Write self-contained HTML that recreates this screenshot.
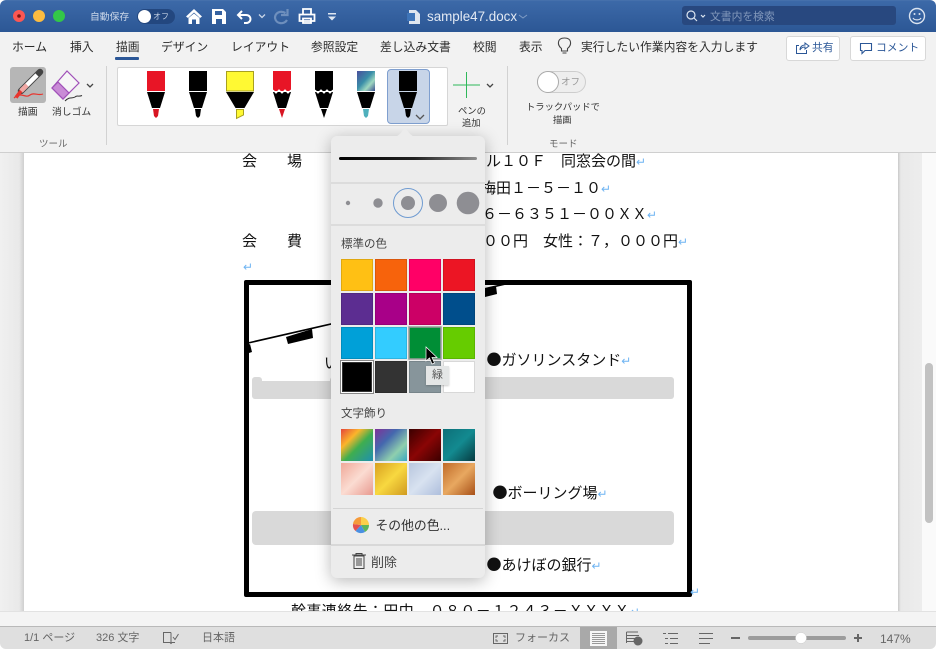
<!DOCTYPE html>
<html lang="ja"><head><meta charset="utf-8"><title>sample47.docx</title>
<style>
html,body{margin:0;padding:0;background:#fff}
#w{position:relative;width:936px;height:649px;overflow:hidden;font-family:"Liberation Sans","Noto Sans CJK JP",sans-serif;background:#fff}
#w div{position:absolute}
.t{position:absolute;white-space:nowrap;line-height:1}
svg{position:absolute;left:0;top:0}
.d{font-family:"Noto Sans CJK JP",sans-serif;font-size:15px;color:#111}
.m{color:#6fb4f2;font-size:12px}
.tab{font-size:11.8px;color:#2b2b2b;top:42px}
.s{font-size:11px;color:#666;top:633px}
.r{font-size:9.8px;color:#333}
</style></head><body><div id="w">

<!-- document area -->
<div style="left:0;top:153px;width:936px;height:458px;overflow:hidden;background:#ebebeb">
  <div style="left:0;top:0;width:24px;height:458px;background:linear-gradient(90deg,#f0f0f0,#e9e9e9 80%,#cfcfcf)"></div>
  <div style="left:24px;top:0;width:874px;height:458px;background:#fff"></div>
  <div style="left:898px;top:0;width:24px;height:458px;background:linear-gradient(90deg,#c9c9c9,#e9e9e9 12%,#ededed)"></div>
  <div style="left:922px;top:0;width:14px;height:458px;background:#fafafa"></div>
  <div style="left:925px;top:210px;width:8px;height:160px;border-radius:4px;background:#c2c2c2"></div>

  <div class="t d" style="left:242px;top:0">会　　場</div>
  <div class="t d" style="left:486px;top:0">ル１０Ｆ　同窓会の間<span class="m">↵</span></div>
  <div class="t d" style="left:481px;top:27px">梅田１－５－１０<span class="m">↵</span></div>
  <div class="t d" style="left:482px;top:53px">６－６３５１－００ＸＸ<span class="m">↵</span></div>
  <div class="t d" style="left:242px;top:80px">会　　費</div>
  <div class="t d" style="left:483px;top:80px">００円　女性：７，０００円<span class="m">↵</span></div>
  <div class="t m" style="left:243px;top:108px">↵</div>

  <div style="left:252px;top:224px;width:10px;height:8px;background:#d9d9d9;border-radius:3px 3px 0 0"></div>
  <div style="left:252px;top:228px;width:100px;height:18px;background:#d9d9d9;border-radius:3px"></div>
  <div style="left:330px;top:224px;width:344px;height:22px;background:#d9d9d9;border-radius:3px"></div>
  <div style="left:252px;top:358px;width:422px;height:34px;background:#d9d9d9;border-radius:4px"></div>
  <div style="left:244px;top:127px;width:438px;height:307px;border:5px solid #000;border-radius:2px"></div>
  <svg width="936" height="458" style="left:0;top:0">
    <path d="M248 190L510 130" stroke="#000" stroke-width="1.6" fill="none"/>
    <path d="M286 184L312 176L313 185L288 191Z" fill="#000"/>
    <path d="M485 136L496 133L497 141L485 144Z" fill="#000"/>
    <path d="M248 192L249 200L252 199L250 191Z" fill="#000"/>
  </svg>
  <div class="t d" style="left:324px;top:202px">い</div>
  <div class="t d" style="left:486.500px;top:199px">●ガソリンスタンド<span class="m">↵</span></div>
  <div class="t d" style="left:492.500px;top:332px">●ボーリング場<span class="m">↵</span></div>
  <div class="t d" style="left:486.500px;top:404px">●あけぼの銀行<span class="m">↵</span></div>
  <div class="t m" style="left:690px;top:433px">↵</div>
  <div class="t d" style="left:291px;top:450px;letter-spacing:.4px">幹事連絡先：田中　０８０－１２４３－ＸＸＸＸ<span class="m">↵</span></div>
</div>

<!-- status -->
<div style="left:0;top:611px;width:936px;height:15px;background:#f4f4f4;border-top:1px solid #e2e2e2;box-sizing:border-box"></div>
<div style="left:0;top:626px;width:936px;height:23px;background:#dfdfdf;border-top:1px solid #b9b9b9;box-sizing:border-box;border-radius:0 0 6px 6px"></div>
<div style="left:580px;top:627px;width:37px;height:22px;background:#a9a9a9"></div>
<span class="t s" style="left:24px">1/1 ページ</span>
<span class="t s" style="left:96px">326 文字</span>
<span class="t s" style="left:202px">日本語</span>
<span class="t s" style="left:515px">フォーカス</span>
<span class="t s" style="left:880px;font-size:12px">147%</span>
<svg width="936" height="649">
  <g fill="none" stroke="#666" stroke-width="1">
    <path d="M171 632.500H163.500V642.500H170L171 643.500L172 642.500H175M171 632.500V643M173 637L175 639.500L178.500 634"/>
    <rect x="493.500" y="633.500" width="14" height="10"/>
    <path d="M496 638V636H498M503 636H505V638M505 639V641H503M498 641H496V639" stroke-width=".9"/>
    <path d="M590.500 631.500H606.500V645.500H590.500Z" fill="#f6f6f6" stroke="#f6f6f6"/>
    <path d="M592 633.500H605M592 635.500H605M592 637.500H605M592 639.500H605M592 641.500H605M592 643.500H605" stroke="#999"/>
    <path d="M626.500 632H638M627 635.500H639M627 638.500H636M627 641.500H634M626.500 632V643"/>
    <path d="M663 633.500H666M668 633.500H678M665 638.500H668M670 638.500H678M665 643.500H668M670 643.500H678"/>
    <path d="M699 633.500H713M699 638.500H713M699 643.500H710"/>
  </g>
  <circle cx="638" cy="641" r="4.500" fill="#666"/>
  <rect x="731" y="637" width="9" height="2" fill="#666"/>
  <rect x="748" y="636" width="98" height="4" rx="2" fill="#9c9c9c"/>
  <circle cx="801" cy="638" r="5.500" fill="#fff" stroke="#ccc" stroke-width=".5"/>
  <path d="M854 638H862M858 634V642" stroke="#666" stroke-width="2"/>
</svg>

<!-- title bar -->
<div style="left:0;top:0;width:936px;height:32px;background:linear-gradient(#4a74ae 0,#3c69a8 4%,#2c5795 100%);border-radius:6px 6px 0 0"></div>
<span class="t" style="left:90px;top:12.500px;font-size:9.800px;color:#c9d6e8">自動保存</span>
<div style="left:137px;top:9px;width:38px;height:15px;border-radius:8px;background:#23477f"></div>
<div style="left:138px;top:10px;width:13px;height:13px;border-radius:50%;background:#fff"></div>
<span class="t" style="left:153px;top:13px;font-size:8px;color:#c3d0e3">オフ</span>
<span class="t" style="left:427px;top:10px;font-size:13.400px;color:#e2e9f3">sample47.docx</span>
<div style="left:682px;top:6px;width:214px;height:19px;border-radius:3px;background:#28487f"></div>
<span class="t" style="left:710px;top:12px;font-size:10.800px;color:#8298bb">文書内を検索</span>
<svg width="936" height="32">
  <circle cx="19" cy="16" r="6" fill="#fc5753"/><circle cx="19" cy="16" r="1.800" fill="#7d1512"/>
  <circle cx="39" cy="16" r="6" fill="#fdbc40"/><circle cx="59" cy="16" r="6" fill="#33c748"/>
  <path d="M194 9L186 16.500L188 18L194 12.500L200 18L202 16.500Z" fill="#fff"/>
  <path d="M188.500 18L194 13.500L199.500 18V24H196V19.500H192V24H188.500Z" fill="#fff"/>
  <path d="M212 9H223L226 12V24H212ZM215 11V15H222V11ZM216 19V24H222V19Z" fill="#fff" fill-rule="evenodd"/>
  <path d="M242 11L238 15L242 19M238 15H246C252 15 252 23 246 23H244" fill="none" stroke="#fff" stroke-width="2"/>
  <path d="M259 14.500L262 17.500L265 14.500" fill="none" stroke="#c9d6e8" stroke-width="1.300"/>
  <path d="M287.500 9V15H281M285.500 13C280 10 275 13 275 18C276 24 284 25 287 20" fill="none" stroke="#6e8fbd" stroke-width="2.200"/>
  <path d="M303 14V9H311V14M299.500 14.500H314.500V21H299.500ZM303 18.500H311V23H303Z" fill="none" stroke="#fff" stroke-width="1.800"/>
  <path d="M328 13H336V14.500H328ZM328 16.500H336L332 20.500Z" fill="#dfe7f2"/>
  <path d="M409 10H416L420 14V24H409Z" fill="#dfe6ef"/><rect x="407" y="13" width="8" height="8" fill="#3e74b8"/>
  <path d="M519 15L523 18L527 15" fill="none" stroke="#7f9cc4" stroke-width="1"/>
  <circle cx="691" cy="15" r="4" fill="none" stroke="#dce5f0" stroke-width="1.200"/>
  <path d="M694 18L697 21M701 15L703 17L705 15" stroke="#dce5f0" stroke-width="1.200" fill="none"/>
  <circle cx="917" cy="16" r="7.500" fill="none" stroke="#dbe4f0" stroke-width="1.400"/>
  <circle cx="914.500" cy="14" r="1" fill="#dbe4f0"/><circle cx="919.500" cy="14" r="1" fill="#dbe4f0"/>
  <path d="M913 18C914.500 20.500 919.500 20.500 921 18" fill="none" stroke="#dbe4f0" stroke-width="1.200"/>
</svg>

<!-- ribbon -->
<div style="left:0;top:32px;width:936px;height:121px;background:#f2f2f2;border-bottom:1px solid #cfcfcf;box-sizing:border-box"></div>
<span class="t tab" style="left:12px">ホーム</span>
<span class="t tab" style="left:70px">挿入</span>
<span class="t tab" style="left:116px">描画</span>
<div style="left:115px;top:57px;width:24px;height:3px;background:#2b5797;border-radius:1px"></div>
<span class="t tab" style="left:161px">デザイン</span>
<span class="t tab" style="left:231px">レイアウト</span>
<span class="t tab" style="left:311px">参照設定</span>
<span class="t tab" style="left:380px">差し込み文書</span>
<span class="t tab" style="left:473px">校閲</span>
<span class="t tab" style="left:519px">表示</span>
<span class="t tab" style="left:581px">実行したい作業内容を入力します</span>
<div style="left:786px;top:36px;width:52px;height:23px;background:#fff;border:1px solid #d8d8d8;border-radius:3px"></div>
<div style="left:850px;top:36px;width:74px;height:23px;background:#fff;border:1px solid #d8d8d8;border-radius:3px"></div>
<span class="t" style="left:812px;top:43px;font-size:10.800px;color:#2b5797">共有</span>
<span class="t" style="left:876px;top:43px;font-size:10.800px;color:#2b5797">コメント</span>

<div style="left:10px;top:67px;width:36px;height:36px;background:#b6b6b6;border-radius:3px"></div>
<span class="t r" style="left:18px;top:107.500px">描画</span>
<span class="t r" style="left:52px;top:107.500px">消しゴム</span>
<span class="t" style="left:39px;top:139.500px;font-size:9.500px;color:#666">ツール</span>
<span class="t r" style="left:458px;top:106.500px;font-size:9.300px">ペンの</span>
<span class="t r" style="left:462px;top:118.500px;font-size:9.300px">追加</span>
<span class="t r" style="left:526px;top:102.500px;font-size:9.300px">トラックパッドで</span>
<span class="t r" style="left:553px;top:115.500px;font-size:9.300px">描画</span>
<span class="t" style="left:549px;top:139.500px;font-size:9.500px;color:#666">モード</span>
<div style="left:117px;top:67px;width:329px;height:57px;background:#fff;border:1px solid #d6d6d6;border-radius:2px"></div>
<div style="left:387px;top:69px;width:41px;height:53px;background:#c8d5e8;border:1px solid #7f9fcf;border-radius:4px;box-sizing:content-box"></div>
<div style="left:537px;top:71px;width:47px;height:20px;border:1px solid #cdcdcd;border-radius:11px;background:#eee"></div>
<div style="left:537px;top:71px;width:20px;height:20px;border-radius:50%;background:#fff;border:1px solid #aaa"></div>
<span class="t" style="left:561px;top:77.500px;font-size:9.500px;color:#999">オフ</span>

<svg width="936" height="153">
  <path d="M106.500 66V145M507.500 66V145" stroke="#d2d2d2"/>
  <!-- draw icon -->
  <path d="M21 91L40 72" stroke="#444" stroke-width="6.500" stroke-linecap="round"/>
  <path d="M21 91L37 75" stroke="#fff" stroke-width="4.500"/>
  <path d="M21 91L27 85" stroke="#f2a8a4" stroke-width="4.500"/>
  <path d="M21 91L16 97.500" stroke="#e8352e" stroke-width="3.500"/>
  <path d="M14 98C22 91 25 99 30 95C34 92 38 96 43 94" fill="none" stroke="#e8352e" stroke-width="1.200"/>
  <!-- eraser -->
  <path d="M52 88L67 71L79 83L63 99Z" fill="#f6f6f6" stroke="#a050b8" stroke-width="1.200"/>
  <path d="M52 88L58 82L69 93L63 99Z" fill="#c98bd6" stroke="#a050b8" stroke-width="1.200"/>
  <path d="M65 101C70 96 72 99 75 97C77 95 79 97 82 95.500" fill="none" stroke="#333" stroke-width="1"/>
  <path d="M87 84L90 87L93 84M487 84L490 87L493 84" fill="none" stroke="#444" stroke-width="1.300"/>
  <!-- pens -->
  <defs>
    <g id="c"><path d="M-9 92H9L4 108H-4Z" fill="#000"/></g>
  </defs>
  <g transform="translate(156 0)"><rect x="-9" y="71" width="18" height="20" fill="#e81526"/><use href="#c"/><path d="M-3 109H3L2 116L0 118L-2 116Z" fill="#d81522"/></g>
  <g transform="translate(198 0)"><rect x="-9" y="71" width="18" height="20" fill="#000"/><use href="#c"/><path d="M-3 109H3L2 116L0 118L-2 116Z" fill="#000"/></g>
  <g transform="translate(240 0)"><rect x="-13.500" y="71.500" width="27" height="19.500" fill="#fff933" stroke="#a8a020"/><path d="M-14 92H14L4.500 108H-4.500Z" fill="#000"/><path d="M-3.500 109.500H3.500V115L-3.500 118.500Z" fill="#fff933" stroke="#a8a020"/></g>
  <g transform="translate(282 0)"><rect x="-9" y="71" width="18" height="20" fill="#e81526"/><path d="M-9 92H9L4 108H-4Z" fill="#000"/><path d="M-9 90L-6 93L-3 90L0 93L3 90L6 93L9 90" fill="none" stroke="#fff" stroke-width="1.200"/><path d="M-3 109H3L0 118Z" fill="#d81522"/></g>
  <g transform="translate(324 0)"><rect x="-9" y="71" width="18" height="20" fill="#000"/><path d="M-9 92H9L4 108H-4Z" fill="#000"/><path d="M-9 90L-6 93L-3 90L0 93L3 90L6 93L9 90" fill="none" stroke="#fff" stroke-width="1.200"/><path d="M-3 109H3L0 118Z" fill="#000"/></g>
  <g transform="translate(366 0)"><defs><linearGradient id="g1" x1="0" y1="0" x2="1" y2="1"><stop offset="0" stop-color="#4a4f9c"/><stop offset=".45" stop-color="#3a8ea8"/><stop offset=".7" stop-color="#9fd8c0"/><stop offset="1" stop-color="#3c4f90"/></linearGradient></defs><rect x="-9" y="71" width="18" height="20" fill="url(#g1)"/><use href="#c"/><path d="M-3 109H3L2 116L0 118L-2 116Z" fill="#4fb0bc"/></g>
  <g transform="translate(408 0)"><rect x="-9" y="71" width="18" height="20" fill="#000"/><use href="#c"/><path d="M-3 109H3L2 116L0 118L-2 116Z" fill="#000"/></g>
  <path d="M416 115L420 119L424 115" fill="none" stroke="#555" stroke-width="1.300"/>
  <!-- add pen -->
  <path d="M453 85H480M466.500 72V98" stroke="#2fb85a" stroke-width="1"/>
  <!-- bulb -->
  <path d="M561.500 48.500C557 45 557 38 564.500 38C572 38 572 45 567.500 48.500V51H561.500Z M562.500 53H566.500" fill="none" stroke="#444" stroke-width="1.100"/>
  <!-- share -->
  <path d="M799 45.500H796.500V53.500H806.500V50M800 50C800 46.500 802.500 45 805 45V43L809 46L805 49V47C803 47 801 48 800 50Z" fill="none" stroke="#2b5797" stroke-width="1"/>
  <!-- comment -->
  <path d="M860.500 43.500H871.500V50.500H865L862 53.500V50.500H860.500Z" fill="none" stroke="#2b5797" stroke-width="1.100"/>
</svg>

<!-- popover -->
<div style="left:331px;top:136px;width:154px;height:442px;background:#ececec;border-radius:6px;box-shadow:0 3px 16px rgba(0,0,0,.28)"></div>
<div style="left:331px;top:182px;width:154px;height:2px;background:#dcdcdc"></div>
<div style="left:331px;top:224px;width:154px;height:2px;background:#dcdcdc"></div>
<div style="left:333px;top:508px;width:150px;height:1px;background:#d4d4d4"></div>
<div style="left:331px;top:544px;width:154px;height:2px;background:#d8d8d8"></div>
<span class="t" style="left:341px;top:238px;font-size:11.500px;color:#444;margin-top:0.500px;transform:translateY(0.500px)">標準の色</span>
<span class="t" style="left:341px;top:408.500px;font-size:11.500px;color:#444">文字飾り</span>
<span class="t" style="left:375.500px;top:520px;font-size:12.800px;color:#333">その他の色...</span>
<span class="t" style="left:371px;top:555.500px;font-size:13px;color:#444">削除</span>

<svg width="936" height="649">
  <defs>
    <linearGradient id="ln" x1="0" x2="1"><stop offset="0" stop-color="#000"/><stop offset=".55" stop-color="#222"/><stop offset="1" stop-color="#8d8d8d"/></linearGradient>
    <linearGradient id="a1" x1="0" y1="0" x2="1" y2="1"><stop offset="0" stop-color="#e4453a"/><stop offset=".3" stop-color="#fbb52b"/><stop offset=".55" stop-color="#3fae4f"/><stop offset="1" stop-color="#1f8fb0"/></linearGradient>
    <linearGradient id="a2" x1="0" y1="0" x2="1" y2="1"><stop offset="0" stop-color="#7f3298"/><stop offset=".35" stop-color="#4468ae"/><stop offset=".7" stop-color="#8fcfae"/><stop offset="1" stop-color="#3ba8c0"/></linearGradient>
    <linearGradient id="a3" x1="0" y1="0" x2="1" y2="1"><stop offset="0" stop-color="#3a0000"/><stop offset=".5" stop-color="#8a0505"/><stop offset="1" stop-color="#3a0000"/></linearGradient>
    <linearGradient id="a4" x1="0" y1="0" x2="1" y2="1"><stop offset="0" stop-color="#0d6f78"/><stop offset=".5" stop-color="#138a90"/><stop offset="1" stop-color="#063a40"/></linearGradient>
    <linearGradient id="a5" x1="0" y1="0" x2="1" y2="1"><stop offset="0" stop-color="#f0a898"/><stop offset=".5" stop-color="#fbdcd2"/><stop offset="1" stop-color="#e89a90"/></linearGradient>
    <linearGradient id="a6" x1="0" y1="0" x2="1" y2="1"><stop offset="0" stop-color="#d8a020"/><stop offset=".5" stop-color="#f8d840"/><stop offset="1" stop-color="#d09a20"/></linearGradient>
    <linearGradient id="a7" x1="0" y1="0" x2="1" y2="1"><stop offset="0" stop-color="#b8c6de"/><stop offset=".5" stop-color="#d8e2f0"/><stop offset="1" stop-color="#aebedc"/></linearGradient>
    <linearGradient id="a8" x1="0" y1="0" x2="1" y2="1"><stop offset="0" stop-color="#c06a28"/><stop offset=".5" stop-color="#e8a860"/><stop offset="1" stop-color="#a85018"/></linearGradient>
    <filter id="nz" x="0" y="0" width="1" height="1" color-interpolation-filters="sRGB">
      <feTurbulence type="fractalNoise" baseFrequency=".45" numOctaves="2" seed="4" result="n"/>
      <feColorMatrix in="n" type="matrix" values="0 0 0 0 .5  0 0 0 0 .5  0 0 0 0 .5  1.400 0 0 0 -.35" result="g"/>
      <feBlend in="g" in2="SourceGraphic" mode="soft-light" result="b"/>
      <feComposite in="b" in2="SourceGraphic" operator="in"/>
    </filter>
  </defs>
  <path d="M395 137C401 135 402 130 405 128C408 130 409 135 415 137Z" fill="#ececec"/>
  <rect x="339" y="157" width="138" height="3" rx="1.500" fill="url(#ln)"/>
  <circle cx="348" cy="203" r="2.200" fill="#8e8e93"/>
  <circle cx="378" cy="203" r="4.700" fill="#8e8e93"/>
  <circle cx="408" cy="203" r="7" fill="#8e8e93"/>
  <circle cx="408" cy="203" r="14.500" fill="none" stroke="#6f9bd1" stroke-width="1"/>
  <circle cx="438" cy="203" r="9" fill="#8e8e93"/>
  <circle cx="468" cy="203" r="11.300" fill="#8e8e93"/>
  <!-- swatches -->
  <g stroke-width="1">
    <rect x="341.500" y="259.500" width="31" height="31" fill="#ffc014" stroke="#e0a810"/>
    <rect x="375.500" y="259.500" width="31" height="31" fill="#f7630c" stroke="#d9570b"/>
    <rect x="409.500" y="259.500" width="31" height="31" fill="#ff0066" stroke="#e0005a"/>
    <rect x="443.500" y="259.500" width="31" height="31" fill="#ec1524" stroke="#d01320"/>
    <rect x="341.500" y="293.500" width="31" height="31" fill="#5c2d91" stroke="#512880"/>
    <rect x="375.500" y="293.500" width="31" height="31" fill="#a80088" stroke="#940078"/>
    <rect x="409.500" y="293.500" width="31" height="31" fill="#cc0066" stroke="#b4005a"/>
    <rect x="443.500" y="293.500" width="31" height="31" fill="#004e8c" stroke="#00457b"/>
    <rect x="341.500" y="327.500" width="31" height="31" fill="#00a0d8" stroke="#008dbe"/>
    <rect x="375.500" y="327.500" width="31" height="31" fill="#33ccff" stroke="#2db4e0"/>
    <rect x="409" y="327" width="32" height="32" fill="#008e36" stroke="#9a9a9a" stroke-width="1.500"/>
    <rect x="443.500" y="327.500" width="31" height="31" fill="#66cc00" stroke="#5ab400"/>
    <rect x="340.500" y="360.500" width="33" height="33" fill="#fff" stroke="#888"/>
    <rect x="342.500" y="362.500" width="29" height="29" fill="#000" stroke="#333"/>
    <rect x="375.500" y="361.500" width="31" height="31" fill="#333" stroke="#2d2d2d"/>
    <rect x="409.500" y="361.500" width="31" height="31" fill="#87959b" stroke="#77848a"/>
    <rect x="443.500" y="361.500" width="31" height="31" fill="#fff" stroke="#d8d8d8"/>
  </g>
  <g filter="url(#nz)">
    <rect x="341" y="429" width="32" height="32" fill="url(#a1)"/>
    <rect x="375" y="429" width="32" height="32" fill="url(#a2)"/>
    <rect x="409" y="429" width="32" height="32" fill="url(#a3)"/>
    <rect x="443" y="429" width="32" height="32" fill="url(#a4)"/>
    <rect x="341" y="463" width="32" height="32" fill="url(#a5)"/>
    <rect x="375" y="463" width="32" height="32" fill="url(#a6)"/>
    <rect x="409" y="463" width="32" height="32" fill="url(#a7)"/>
    <rect x="443" y="463" width="32" height="32" fill="url(#a8)"/>
  </g>
  <!-- color wheel -->
  <path d="M361 525V517A8 8 0 0 1 369 525Z" fill="#fbcf4a"/>
  <path d="M361 525H369A8 8 0 0 1 365 532Z" fill="#5cb45a"/>
  <path d="M361 525L365 532A8 8 0 0 1 355.500 531Z" fill="#4a90e2"/>
  <path d="M361 525L355.500 531A8 8 0 0 1 353 524Z" fill="#e4504e"/>
  <path d="M361 525L353 524A8 8 0 0 1 361 517Z" fill="#f59a3a"/>
  <!-- trash -->
  <path d="M354 556H364V568.500H354ZM352 555H366M356 555V553.500H362V555M357 558V566M359 558V566M361 558V566" fill="none" stroke="#444" stroke-width="1"/>
  <!-- cursor -->
  <path d="M426 347V361L429.500 358L432 364L434.500 363L432 357.500H437Z" fill="#000" stroke="#fff" stroke-width=".7"/>
</svg>
<div style="left:426px;top:366px;width:23px;height:19px;background:#e4e6e6;box-shadow:0 1px 2px rgba(0,0,0,.2)"></div>
<span class="t" style="left:432px;top:370px;font-size:11px;color:#555">緑</span>
</div></body></html>
